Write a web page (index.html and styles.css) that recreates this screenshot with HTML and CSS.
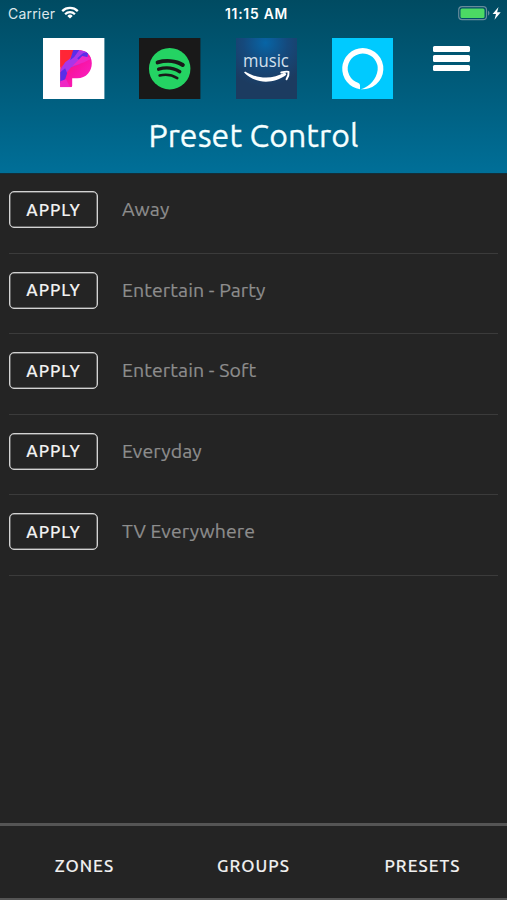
FILE: index.html
```html
<!DOCTYPE html>
<html lang="en">
<head>
<meta charset="utf-8">
<title>Preset Control</title>
<link rel="stylesheet" href="styles.css">
</head>
<body>
<div class="app">
  <header class="header">
    <div class="status">
      <div class="carrier"><span>Carrier</span>
        <svg width="18" height="13" viewBox="0 0 18 13"><g fill="none" stroke="#fff" stroke-width="2.3"><path d="M1.2 5.1a11.2 11.2 0 0 1 15.6 0"/><path d="M4.1 8.2a7 7 0 0 1 9.8 0"/></g><path d="M9 12.6 6.3 9.9a3.9 3.9 0 0 1 5.4 0z" fill="#fff"/></svg>
      </div>
      <div class="clock">11:15 AM</div>
      <div class="power">
        <svg width="44" height="15" viewBox="0 0 44 15"><rect x=".7" y=".7" width="27.8" height="13" rx="3.4" fill="none" stroke="#668b9b" stroke-width="1.2"/><rect x="2.5" y="2.5" width="24" height="9.4" rx="1.5" fill="#4cd964"/><path d="M30 4.6q3 2.6 0 5.2z" fill="#668b9b"/><path d="M40.5 1 34.600 8h3.4l-1.500 5.700 6.200-7.500h-3.600z" fill="#fff"/></svg>
      </div>
    </div>
    <nav class="services">
      <svg class="tile" viewBox="0 0 61 61">
        <defs>
          <linearGradient id="pink" x1="0" y1="0" x2="1" y2="1"><stop offset="0" stop-color="#ff2636"/><stop offset=".5" stop-color="#f814a4"/><stop offset="1" stop-color="#fa24d0"/></linearGradient>
          <clipPath id="pshape"><path d="M17 12h18c8 0 13.500 5 13.500 13S43 40 34 40h-5v7.500a1.500 1.500 0 0 1-1.500 1.500H17z"/></clipPath>
        </defs>
        <path fill="#fff" d="M0 0h61v61H0z"/>
        <g clip-path="url(#pshape)"><path fill="url(#pink)" d="M16 11h34v39H16z"/><path fill="#ff2636" d="M17 12h14l-6 11-8 6z"/><path fill="#a936e8" d="m32 12 11 1 2 5-9 8-8 3-5 6-3 5-3-8 5-8 7-5z"/><path fill="#5a2de8" d="m34 20 6-5 5-1-1 5-8 3zM17 34l5-4 2 5-2 6-5 4zM30 12h6l-5 7-4 3z"/><path fill="#ee27c4" d="m39 18-10 10 12-4 8-4zM17 43l6-2 4 8H17z"/></g>
      </svg>
      <svg class="tile" viewBox="0 0 61 61"><path fill="#191919" d="M0 0h61v61H0z"/><circle cx="30.500" cy="30.500" r="20.600" fill="#24d363"/><g fill="none" stroke="#191919" stroke-linecap="round"><path d="M18.500 24.200c8-2.300 18-1.800 25 2.600" stroke-width="4"/><path d="M19.500 31c7-2.100 15-1.200 21 2.500" stroke-width="3.300"/><path d="M20.500 37.300c6-1.500 12-.8 17.500 2.500" stroke-width="2.600"/></g></svg>
      <svg class="tile" viewBox="0 0 61 61"><defs><radialGradient id="music" cx=".48" cy=".08" r=".72"><stop stop-color="#0765a6"/><stop offset=".5" stop-color="#15497c"/><stop offset="1" stop-color="#1c3b60"/></radialGradient></defs><path fill="url(#music)" d="M0 0h61v61H0z"/><text x="7" y="29" textLength="45.500" lengthAdjust="spacingAndGlyphs" class="music">music</text><path d="M8 34.300c11 11.500 29 12 42 2.200l-1.200-2.500C36 41.500 22 41 9 33.200z" fill="#fff"/><path d="M45 34.300c3-.8 6-1 7.200-.7.300 2-.5 5-2 7.400" fill="none" stroke="#fff" stroke-width="1.900" stroke-linecap="round" stroke-linejoin="round"/></svg>
      <svg class="tile" viewBox="0 0 61 61"><path fill="#00caff" d="M0 0h61v61H0z"/><path fill="#fff" fill-rule="evenodd" d="M30.500 10a20.500 20.500 0 0 0-2.700 40.800v-4q0-1.500-2-2.300a14.900 14.900 0 1 1 18.900-9.500C42 44 35 49 28.500 50.900A20.500 20.500 0 1 0 30.500 10z"/></svg>
      <div class="menu"><i></i><i></i><i></i></div>
    </nav>
    <h1>Preset Control</h1>
  </header>
  <main class="list">
    <div class="row"><button>APPLY</button><span>Away</span></div>
    <div class="row"><button>APPLY</button><span>Entertain - Party</span></div>
    <div class="row"><button>APPLY</button><span>Entertain - Soft</span></div>
    <div class="row"><button>APPLY</button><span>Everyday</span></div>
    <div class="row"><button>APPLY</button><span>TV Everywhere</span></div>
  </main>
  <footer class="tabs"><a>ZONES</a><a>GROUPS</a><a>PRESETS</a></footer>
</div>
</body>
</html>
```
FILE: styles.css
```css
* { box-sizing: border-box; }
body { margin: 0; background: #242424; font-family: Ubuntu, "Noto Sans", sans-serif; }
svg { display: block; }
.app { height: 900px; display: flex; flex-direction: column; overflow: hidden; }
.header { height: 173px; flex: none; background: linear-gradient(#004b62, #005f80 58%, #006f98); box-shadow: 0 1px 1px #142e38; }
.status { height: 37.500px; padding: 5px 5px 0 8px; display: grid; grid-template-columns: 1fr auto 1fr; align-items: start; color: #fff; font: 14px/18px Inter, sans-serif; }
.carrier { display: flex; gap: 6px; color: #dce7eb; letter-spacing: .2px; }
.carrier svg { margin-top: 1px; }
.clock { font-weight: 600; font-size: 13.800px; letter-spacing: .8px; padding-left: 3px; }
.power { justify-self: end; margin-top: 1px; }
.services { display: flex; gap: 34.700px; padding-left: 43.400px; height: 61px; }
.tile { width: 61.400px; height: 61.400px; flex: none; }
.music { font: 400 18px "Open Sans", sans-serif; fill: #d3e0ed; }
.menu { margin: 8.500px 0 0 5px; width: 37px; display: flex; flex-direction: column; gap: 3px; }
.menu i { height: 6.300px; background: #fff; border-radius: 1.500px; }
h1 { margin: 14.500px 0 0; text-align: center; font-weight: 400; font-size: 32px; line-height: 44px; color: #f5ffff; letter-spacing: .1px; -webkit-text-stroke: .3px; }
.list { flex: 1; padding: 0 9px; }
.row { height: 80.600px; padding-top: 18px; display: flex; align-items: flex-start; gap: 24px; border-bottom: 1px solid #3b3b3b; font-size: 19.500px; line-height: 36px; color: #8d8d8d; letter-spacing: .1px; -webkit-text-stroke: .2px; }
.row button { width: 89px; height: 37px; padding: 0; border: 1.600px solid #d2d2d2; border-radius: 5px; background: none; color: #f2f2f2; font: 500 17px/34px Ubuntu, "Noto Sans", sans-serif; letter-spacing: .9px; box-shadow: inset 0 0 0 .5px #aaa; -webkit-text-stroke: .1px; }
.tabs { height: 77px; flex: none; border-top: 3px solid #555; border-bottom: 2px solid #555; display: grid; grid-template-columns: repeat(3, 1fr); text-align: center; color: #f0f0f0; font-size: 17px; font-weight: 500; line-height: 80px; letter-spacing: 1px; -webkit-text-stroke: .1px; }
```
